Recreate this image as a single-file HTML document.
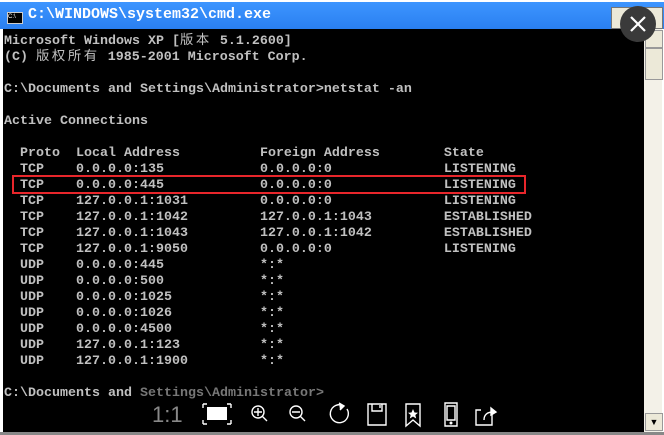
<!DOCTYPE html>
<html><head><meta charset="utf-8"><style>
*{margin:0;padding:0}
body{width:664px;height:435px;background:#fff;position:relative;overflow:hidden}
#tb{position:absolute;left:0;top:2px;width:664px;height:27px;background:linear-gradient(#3d95ff,#2a7ff0);}
#tb .t{position:absolute;left:28px;top:4px;color:#fff;font:bold 15px "Liberation Mono",monospace}
#tb .ic{position:absolute;left:7px;top:10px;width:14px;height:10px;background:#000;border:1px solid #ccc;color:#fff;font:6px sans-serif;line-height:9px}
.btn{position:absolute;top:5px;width:20px;height:20px;background:#ece9d8;border:1px solid #777}
#con{position:absolute;left:3px;top:29px;width:641px;height:403px;background:#000}
pre{position:absolute;left:4px;top:34px;font:bold 13.33px/16px "Liberation Mono","WenQuanYi Zen Hei",monospace;color:#c0c0c0;}
pre .c{font-weight:normal;letter-spacing:2.6px}
#sb{position:absolute;left:644px;top:29px;width:18px;height:403px;background:#f3f1e8}
.sbb{position:absolute;left:645px;width:16px;background:#ece9d8;border:1px solid #999}
#red{position:absolute;left:12px;top:175px;width:510px;height:15px;border:2px solid #e8262b}
#close{position:absolute;left:620px;top:6px;width:36px;height:36px;border-radius:50%;background:#3a3a3a}
#bot{position:absolute;left:0;top:432px;width:664px;height:3px;background:#888}
</style></head><body>
<div id="tb"><div class="ic">C:\</div><div class="t">C:\WINDOWS\system32\cmd.exe</div>
<div class="btn" style="left:611px"></div><div class="btn" style="left:641px"></div></div>
<div id="con"></div>
<div id="sb"></div>
<div class="sbb" style="top:30px;height:16px"></div>
<div class="sbb" style="top:48px;height:30px"></div>
<div class="sbb" style="top:413px;height:16px;font:9px sans-serif;text-align:center;line-height:16px">▼</div>
<pre>Microsoft Windows XP [<span class="c">版本</span> 5.1.2600]
(C) <span class="c">版权所有</span> 1985-2001 Microsoft Corp.

C:\Documents and Settings\Administrator>netstat -an

Active Connections

  Proto  Local Address          Foreign Address        State
  TCP    0.0.0.0:135            0.0.0.0:0              LISTENING
  TCP    0.0.0.0:445            0.0.0.0:0              LISTENING
  TCP    127.0.0.1:1031         0.0.0.0:0              LISTENING
  TCP    127.0.0.1:1042         127.0.0.1:1043         ESTABLISHED
  TCP    127.0.0.1:1043         127.0.0.1:1042         ESTABLISHED
  TCP    127.0.0.1:9050         0.0.0.0:0              LISTENING
  UDP    0.0.0.0:445            *:*
  UDP    0.0.0.0:500            *:*
  UDP    0.0.0.0:1025           *:*
  UDP    0.0.0.0:1026           *:*
  UDP    0.0.0.0:4500           *:*
  UDP    127.0.0.1:123          *:*
  UDP    127.0.0.1:1900         *:*

C:\Documents and <span style="color:#777">Settings\Administrator&gt;</span></pre>
<div id="red"></div>
<div id="close"><svg width="36" height="36"><path d="M11 11L25 25M25 11L11 25" stroke="#fff" stroke-width="2.2"/></svg></div>
<svg style="position:absolute;left:150px;top:400px" width="370" height="30" fill="none" stroke="#fff" stroke-width="1.4">
<text x="2" y="22" fill="#888" stroke="none" font-family="Liberation Sans" font-size="22">1:1</text>
<rect x="56" y="6" width="22" height="15" fill="#fff" stroke="#000" stroke-width="2"/>
<path d="M53 4h4M53 4v4M81 4h-4M81 4v4M53 24h4M53 24v-4M81 24h-4M81 24v-4"/>
<circle cx="108" cy="12" r="6"/><path d="M104 12h8M108 8v8M112 16l5 5"/>
<circle cx="146" cy="12" r="6"/><path d="M142 12h8M150 16l5 5"/>
<path d="M194 6a9 9 0 1 0 3 3"/><path d="M189 3l5 3-4 4" fill="#fff"/>
<path d="M218 4h18v21h-18zM222 4v7h10v-7M230 5v3"/>
<path d="M256 4h14v22l-7-6-7 6z"/><path d="M263 9l1.5 3.5 3.5.3-2.7 2.2.9 3.5-3.2-2-3.2 2 .9-3.5-2.7-2.2 3.5-.3z" fill="#fff" stroke="none"/>
<path d="M295 3h12v23h-12zM297 6h8v14h-8z"/><circle cx="301" cy="23" r="0.8" fill="#fff"/>
<path d="M342 10v15h-16v-15h5M334 20c0-5 3-8 9-8" /><path d="M341 8l5 4-5 3z" fill="#fff"/>
</svg>
<div id="bot"></div>
</body></html>
